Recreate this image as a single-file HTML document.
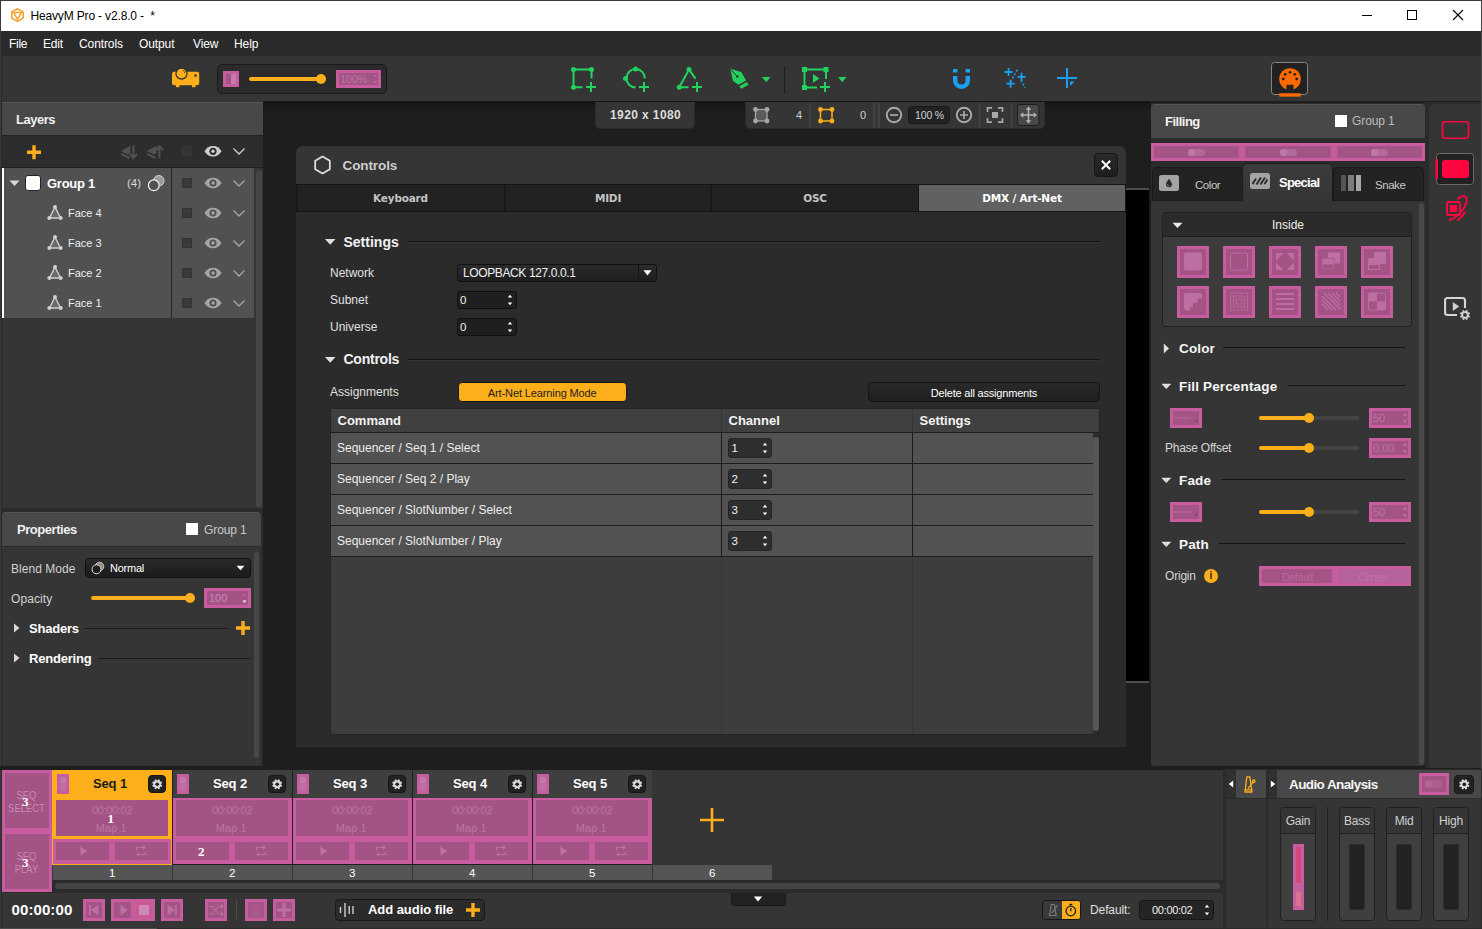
<!DOCTYPE html>
<html lang="en">
<head>
<meta charset="utf-8">
<title>HeavyM Pro - v2.8.0</title>
<style>
*{box-sizing:border-box;margin:0;padding:0}
html,body{width:1482px;height:929px;overflow:hidden;background:#353535}
body{font-family:"Liberation Sans",sans-serif;font-size:12px;color:#e4e4e4;position:relative}
.a{position:absolute}
.t{position:absolute;white-space:nowrap;line-height:1}
.b{font-weight:bold}
svg{position:absolute;overflow:visible}
/* pink learn-mode overlay widgets */
.pk{position:absolute;background:#a35384;border:3px solid #c75d9f}
.pkf{position:absolute;background:#c75d9f}
.pki{position:absolute;background:#a35384}
.pt{color:#bb76a3}
/* generic */
.sep{position:absolute;background:#1c1c1c}
.inp{position:absolute;background:#1d1d1d;border:1px solid #101010;border-radius:3px}
</style>
</head>
<body>
<!-- ===== window chrome ===== -->
<div class="a" id="titlebar" style="left:0;top:0;width:1482px;height:31px;background:#fff"></div>
<div class="a" style="left:0;top:0;width:1482px;height:1px;background:#3b3b3b"></div>
<div class="a" style="left:0;top:31px;width:2px;height:898px;background:#2b2b2b"></div><div class="a" style="left:0;top:0;width:1px;height:929px;background:#3a3a3a"></div>
<div class="t" style="left:30.500px;top:10px;font-size:12px;letter-spacing:-.16px;color:#000">HeavyM Pro - v2.8.0 -&nbsp; *</div>
<!-- SECTION:titleicons -->
<svg style="left:11px;top:8px" width="13" height="14" viewBox="0 0 13 14"><path d="M6.5 .7 12.2 3.9V10.1L6.5 13.3.8 10.1V3.9Z" fill="none" stroke="#f6a233" stroke-width="1.600" stroke-linejoin="round"/><path d="M2.600 4.600H10.400L6.500 11.200Z" fill="none" stroke="#f6a233" stroke-width="1.500" stroke-linejoin="round"/><path d="M.8 3.9 2.6 4.6M12.2 3.9 10.4 4.6M6.5 13.3V11.2" stroke="#f5a53a" stroke-width="1"/></svg>
<svg style="left:1362px;top:10px" width="11" height="11" viewBox="0 0 11 11"><path d="M0 5.5H10" stroke="#000" stroke-width="1"/></svg>
<svg style="left:1407px;top:10px" width="11" height="11" viewBox="0 0 11 11"><rect x=".5" y=".5" width="9" height="9" fill="none" stroke="#000" stroke-width="1"/></svg>
<svg style="left:1453px;top:10px" width="11" height="11" viewBox="0 0 11 11"><path d="M0 0 10 10M10 0 0 10" stroke="#000" stroke-width="1.1"/></svg>

<!-- /SECTION:titleicons -->
<!-- ===== menubar ===== -->
<div class="a" id="menubar" style="left:2px;top:31px;width:1480px;height:25px;background:#2a2a2a"></div>
<!-- SECTION:menu -->
<div class="t" style="left:9px;top:38px;color:#fff;letter-spacing:-.3px">File</div>
<div class="t" style="left:43px;top:38px;color:#fff;letter-spacing:-.2px">Edit</div>
<div class="t" style="left:79px;top:38px;color:#fff;letter-spacing:-.1px">Controls</div>
<div class="t" style="left:139px;top:38px;color:#fff;letter-spacing:-.1px">Output</div>
<div class="t" style="left:193px;top:38px;color:#fff;letter-spacing:-.1px">View</div>
<div class="t" style="left:234px;top:38px;color:#fff;letter-spacing:-.1px">Help</div>

<!-- /SECTION:menu -->
<!-- ===== main toolbar ===== -->
<div class="a" id="toolbar" style="left:2px;top:56px;width:1480px;height:45px;background:#353535"></div>
<!-- SECTION:toolbar -->
<!-- projector -->
<svg style="left:171px;top:66px" width="30" height="22" viewBox="0 0 30 22"><rect x="1" y="5.700" width="27.200" height="13.600" rx="2.200" fill="#fcaf1b"/><rect x="5" y="19" width="3.400" height="2.200" fill="#fcaf1b"/><rect x="21" y="19" width="3.400" height="2.200" fill="#fcaf1b"/><circle cx="10.500" cy="7.600" r="6.100" fill="#2a2a35"/><circle cx="10.500" cy="7.600" r="4.900" fill="#fcaf1b"/><path d="M12.300 4.600a3.300 3.300 0 0 1 1.500 2.200" stroke="#2a2a35" stroke-width="1" fill="none"/><circle cx="24.500" cy="9.500" r="1.300" fill="#3a3530"/></svg>
<!-- master opacity box -->
<div class="a" style="left:217px;top:64px;width:170px;height:30px;background:#2b2b2b;border:1px solid #1a1a1a;border-radius:5px"></div>
<div class="pk" style="left:223px;top:71px;width:16px;height:16px"></div><div class="a" style="left:231px;top:74px;width:5px;height:10px;background:#c57aa7"></div>
<div class="a" style="left:249px;top:77px;width:74px;height:4px;border-radius:2px;background:#fcaf1b"></div>
<div class="a" style="left:316px;top:74px;width:10px;height:10px;border-radius:5px;background:#fcaf1b"></div>
<div class="pk" style="left:336px;top:70px;width:45px;height:18px"></div>
<div class="t pt" style="left:340px;top:74px;font-size:11px;letter-spacing:-.3px">100%</div>
<svg style="left:372px;top:73px" width="6" height="12" viewBox="0 0 6 12"><path d="M1 3.500 3 1.500 5 3.500ZM1 8.500 3 10.500 5 8.500Z" fill="#b9729f"/></svg>
<!-- green shape tools -->
<svg style="left:560px;top:60px" width="300" height="40" viewBox="0 0 300 40" fill="none" stroke="#22d15e" stroke-width="2" stroke-linecap="butt">
 <path d="M31.500 18.500V9.500H13.500V27.300H22.500"/><g fill="#22d15e" stroke="none"><circle cx="13.500" cy="9.500" r="2.500"/><circle cx="31.500" cy="9.500" r="2.500"/><circle cx="13.500" cy="27.300" r="2.500"/></g><path d="M26 27h10M31 22v10"/>
 <path d="M84.800 18.500A9.200 9.200 0 1 0 75.600 27.500"/><g fill="#22d15e" stroke="none"><circle cx="75.600" cy="9" r="2.500"/><circle cx="65.500" cy="18.500" r="2.500"/></g><path d="M79 27h10M84 22v10"/>
 <path d="M135.500 18.700 129 9.500 119.300 27.200H128.500"/><g fill="#22d15e" stroke="none"><circle cx="129" cy="9.500" r="2.500"/><circle cx="119.300" cy="27.300" r="2.500"/></g><path d="M132 27h10M137 22v10"/>
 <g fill="#22d15e" stroke="none"><path d="M170.300 8.600 181.500 12.300 186 20.500 178.500 24.800 173 21Z"/><path d="M179.300 26.300 186.800 22 188.500 24.800 181.200 28.800Z"/><path d="M202 17h8.500l-4.250 5.200Z"/><path d="M278 17h8.500l-4.250 5.200Z"/></g>
 <circle cx="177.300" cy="16.500" r="1.300" fill="#353535" stroke="none"/><path d="M170.600 9 176.500 15.700" stroke="#353535" stroke-width="1"/>
 <path d="M224.500 6v28" stroke="#1e1e1e" stroke-width="1.200"/>
 <path d="M266 19V9.500H244.500V27.500H257"/><g fill="#22d15e" stroke="none"><rect x="242" y="7" width="5" height="5"/><rect x="263.500" y="7" width="5" height="5"/><rect x="242" y="25" width="5" height="5"/><path d="M253 14 259.500 18.500 253 23Z"/></g><path d="M260 27h10M265 22v10"/>
</svg>
<!-- blue tools -->
<svg style="left:940px;top:60px" width="160" height="40" viewBox="0 0 160 40" fill="none" stroke="#1aa1f5" stroke-width="2">
 <path d="M15.200 16v4.500a6.300 6.300 0 0 0 12.600 0V16" stroke-width="4.400"/><path d="M13 10.800h4.400M25.600 10.800H30" stroke-width="3.600"/>
 <path d="M64.500 12h8M68.500 8v8M77.500 16.800h8M81.500 12.800v8M66.500 23.700h8M70.500 19.700v8" stroke-width="1.800"/><path d="M77.500 9.500 71 21" stroke-width="1.300" stroke-dasharray="2.500 1.500"/><path d="M81 20 85 28" stroke-width="1.300" stroke-dasharray="2.500 1.500"/>
 <path d="M117 18h20M127 8v20"/><path d="M130 21.500h4.500l-4.500 4.500Z" fill="#1aa1f5" stroke="none"/>
</svg>
<!-- midi button -->
<div class="a" style="left:1271px;top:62px;width:37px;height:33px;background:#222;border:1px solid #858585;border-radius:3.500px"></div>
<svg style="left:1277.500px;top:66.500px" width="24" height="30" viewBox="0 0 24 30"><circle cx="12" cy="12" r="10.800" fill="#ff6a00"/><rect x="8.500" y="17.800" width="7" height="6" fill="#222"/><g fill="#222"><circle cx="12" cy="5.300" r="1.400"/><circle cx="7.200" cy="7.300" r="1.400"/><circle cx="16.800" cy="7.300" r="1.400"/><circle cx="5.300" cy="12" r="1.400"/><circle cx="18.700" cy="12" r="1.400"/></g><rect x="1.300" y="26.300" width="21.400" height="3.300" fill="#ff6a00"/></svg>

<!-- /SECTION:toolbar -->
<!-- ===== canvas ===== -->
<div class="a" id="canvas" style="left:263px;top:101px;width:1218px;height:669px;background:#1e1e1e"></div>
<!-- SECTION:canvas -->
<div class="a" style="left:263px;top:101px;width:887px;height:12px;background:linear-gradient(#141414,#1e1e1e)"></div>
<div class="a" style="left:1126px;top:188px;width:23px;height:2px;background:#4e4e4e"></div>
<div class="a" style="left:1126px;top:190px;width:23px;height:491px;background:#000"></div>
<div class="a" style="left:1126px;top:681px;width:23px;height:2px;background:#4e4e4e"></div>
<div class="a" style="left:595px;top:102px;width:100px;height:27px;background:#353535;border:1px solid #2a2a2a;border-top:0;border-radius:0 0 5px 5px"></div>
<div class="t b" style="left:610px;top:109px;font-size:12px;color:#dcdcdc;letter-spacing:.4px">1920 x 1080</div>
<div class="a" style="left:745px;top:102px;width:300px;height:27px;background:#353535;border:1px solid #2a2a2a;border-top:0;border-radius:0 0 5px 5px"></div>
<svg style="left:745px;top:102px" width="300" height="27" viewBox="0 0 300 27" fill="none">
 <rect x="10.500" y="7.500" width="11.500" height="11.500" fill="#5a5a5a" stroke="#a8a8a8" stroke-width="1.300"/><g fill="#a8a8a8"><circle cx="10.500" cy="7.500" r="2.400"/><circle cx="22" cy="7.500" r="2.400"/><circle cx="10.500" cy="19" r="2.400"/><circle cx="22" cy="19" r="2.400"/></g>
 <rect x="75.500" y="7.500" width="11.500" height="11.500" stroke="#fcaf1b" stroke-width="1.500"/><g fill="#fcaf1b"><circle cx="75.500" cy="7.500" r="2.400"/><circle cx="87" cy="7.500" r="2.400"/><circle cx="75.500" cy="19" r="2.400"/><circle cx="87" cy="19" r="2.400"/></g>
 <path d="M65 1v25M129.200 1v25M134 1v25M234.500 1v25M266.500 1v25" stroke="#454545" stroke-width="1.600"/>
 <circle cx="149" cy="13" r="7.200" stroke="#ababab" stroke-width="1.900"/><path d="M145 13h8" stroke="#a8a8a8" stroke-width="1.700"/>
 <circle cx="219" cy="13" r="7.200" stroke="#ababab" stroke-width="1.900"/><path d="M215 13h8M219 9v8" stroke="#a8a8a8" stroke-width="1.700"/>
 <rect x="163.500" y="4.500" width="41" height="17" rx="3" fill="#222" stroke="#1a1a1a"/>
 <path d="M242.500 10V5.800h4.500M253 5.800h4.500V10M257.500 16v4.200H253M247 20.200h-4.500V16" stroke="#a8a8a8" stroke-width="1.700"/><rect x="247" y="10" width="6" height="6" fill="#a8a8a8"/>
 <rect x="272.500" y="2.500" width="21.500" height="21" rx="2.500" fill="#484848" stroke="#1e1e1e"/>
 <path d="M277 13h13M283.500 6.500v13" stroke="#b4b4b4" stroke-width="1.500"/><path d="M283.500 4.500 286.300 7.800h-5.600ZM283.500 21.500 286.300 18.200h-5.600ZM275 13 278.300 10.200v5.600ZM292 13 288.700 10.200v5.600Z" fill="#b4b4b4"/>
</svg>
<div class="t" style="left:796px;top:110px;font-size:11px;color:#cfcfcf">4</div>
<div class="t" style="left:860px;top:110px;font-size:11px;color:#cfcfcf">0</div>
<div class="t" style="left:915px;top:110px;font-size:10.500px;color:#d4d4d4;letter-spacing:-.15px">100 %</div>

<!-- /SECTION:canvas -->
<!-- ===== left: layers ===== -->
<!-- SECTION:layers -->
<div class="a" style="left:2px;top:102px;width:261px;height:33px;background:#484848;border-top:1px solid #555"></div>
<div class="t b" style="left:16px;top:112.500px;font-size:13px;color:#efefef;letter-spacing:-.5px">Layers</div>
<div class="a" style="left:2px;top:135px;width:261px;height:33px;background:#2d2d2d;border-top:1px solid #222;border-bottom:1px solid #202020"></div>
<div class="a" style="left:2px;top:168px;width:261px;height:340px;background:#353535"></div>
<div class="a" style="left:2px;top:168px;width:252px;height:149.500px;background:#515151"></div>
<div class="a" style="left:1.500px;top:168px;width:2.800px;height:149.500px;background:#fff"></div>
<div class="a" style="left:171px;top:168px;width:1px;height:149.500px;background:#262626"></div>
<div class="a" style="left:256px;top:170px;width:6px;height:337px;background:#454545;border-radius:3px"></div>
<svg style="left:0;top:133.500px" width="263" height="34" viewBox="0 0 263 34">
<path d="M27 18.300h14M34 11.300v14" stroke="#fcaf1b" stroke-width="3.400"/>
<g fill="#525252" stroke="none"><path d="M120.800 17 130.300 12V19.500L127.500 20.300Z"/><path d="M146.800 17 156.300 12V19.500L153.500 20.300Z"/></g><g stroke="#525252" stroke-width="2" fill="none"><path d="M121.200 19.800 129.500 24M147.200 19.800 155.500 24"/><path d="M133.400 11.500v12M129.800 19.800l3.600 4.300 3.600-4.300"/><path d="M159.400 24.500v-12M155.800 16.300l3.600-4.300 3.600 4.300"/></g><rect x="182.500" y="12.500" width="9" height="9" fill="#333" stroke="#383838"/>
<g transform="translate(204.5 12)"><path d="M0 5.300C2 1.800 5 0 8.500 0S15 1.800 17 5.300C15 8.800 12 10.600 8.500 10.600S2 8.800 0 5.300Z" fill="#cfcfcf"/><circle cx="8.500" cy="5.300" r="3.600" fill="#2b2b2b"/><circle cx="8.500" cy="5.300" r="1.700" fill="#cfcfcf"/></g>
<path d="M233.500 14.500 239 20 244.500 14.500" stroke="#cfcfcf" stroke-width="1.300" fill="none"/>
</svg>
<svg style="left:0;top:168px" width="263" height="150" viewBox="0 0 263 150">
<rect x="182.500" y="10.5" width="9" height="9" fill="#393939" stroke="#333"/>
<g transform="translate(204.5 9.7)"><path d="M0 5.300C2 1.800 5 0 8.500 0S15 1.800 17 5.300C15 8.800 12 10.600 8.500 10.600S2 8.800 0 5.300Z" fill="#a6a6a6"/><circle cx="8.500" cy="5.300" r="3.600" fill="#515151"/><circle cx="8.500" cy="5.300" r="1.700" fill="#a6a6a6"/></g>
<path d="M233.500 12.5 239 18 244.500 12.5" stroke="#a6a6a6" stroke-width="1.300" fill="none"/>
<rect x="182.500" y="40.5" width="9" height="9" fill="#393939" stroke="#333"/>
<g transform="translate(204.5 39.7)"><path d="M0 5.300C2 1.800 5 0 8.500 0S15 1.800 17 5.300C15 8.800 12 10.600 8.500 10.600S2 8.800 0 5.300Z" fill="#a6a6a6"/><circle cx="8.500" cy="5.300" r="3.600" fill="#515151"/><circle cx="8.500" cy="5.300" r="1.700" fill="#a6a6a6"/></g>
<path d="M233.500 42.5 239 48 244.500 42.5" stroke="#a6a6a6" stroke-width="1.300" fill="none"/>
<g transform="translate(47 36.5)"><path d="M8 2.500 2.500 13.500h11Z" fill="#6a6a6a" stroke="#d0d0d0" stroke-width="1.400" stroke-linejoin="round"/><g fill="#d0d0d0"><circle cx="8" cy="2.500" r="2"/><circle cx="2.300" cy="13.500" r="2"/><circle cx="13.700" cy="13.500" r="2"/></g></g>
<rect x="182.500" y="70.5" width="9" height="9" fill="#393939" stroke="#333"/>
<g transform="translate(204.5 69.7)"><path d="M0 5.300C2 1.800 5 0 8.500 0S15 1.800 17 5.300C15 8.800 12 10.600 8.500 10.600S2 8.800 0 5.300Z" fill="#a6a6a6"/><circle cx="8.500" cy="5.300" r="3.600" fill="#515151"/><circle cx="8.500" cy="5.300" r="1.700" fill="#a6a6a6"/></g>
<path d="M233.500 72.5 239 78 244.500 72.5" stroke="#a6a6a6" stroke-width="1.300" fill="none"/>
<g transform="translate(47 66.5)"><path d="M8 2.500 2.500 13.500h11Z" fill="#6a6a6a" stroke="#d0d0d0" stroke-width="1.400" stroke-linejoin="round"/><g fill="#d0d0d0"><circle cx="8" cy="2.500" r="2"/><circle cx="2.300" cy="13.500" r="2"/><circle cx="13.700" cy="13.500" r="2"/></g></g>
<rect x="182.500" y="100.5" width="9" height="9" fill="#393939" stroke="#333"/>
<g transform="translate(204.5 99.7)"><path d="M0 5.300C2 1.800 5 0 8.500 0S15 1.800 17 5.300C15 8.800 12 10.600 8.500 10.600S2 8.800 0 5.300Z" fill="#a6a6a6"/><circle cx="8.500" cy="5.300" r="3.600" fill="#515151"/><circle cx="8.500" cy="5.300" r="1.700" fill="#a6a6a6"/></g>
<path d="M233.500 102.5 239 108 244.500 102.5" stroke="#a6a6a6" stroke-width="1.300" fill="none"/>
<g transform="translate(47 96.5)"><path d="M8 2.500 2.500 13.500h11Z" fill="#6a6a6a" stroke="#d0d0d0" stroke-width="1.400" stroke-linejoin="round"/><g fill="#d0d0d0"><circle cx="8" cy="2.500" r="2"/><circle cx="2.300" cy="13.500" r="2"/><circle cx="13.700" cy="13.500" r="2"/></g></g>
<rect x="182.500" y="130.5" width="9" height="9" fill="#393939" stroke="#333"/>
<g transform="translate(204.5 129.7)"><path d="M0 5.300C2 1.800 5 0 8.500 0S15 1.800 17 5.300C15 8.800 12 10.600 8.500 10.600S2 8.800 0 5.300Z" fill="#a6a6a6"/><circle cx="8.500" cy="5.300" r="3.600" fill="#515151"/><circle cx="8.500" cy="5.300" r="1.700" fill="#a6a6a6"/></g>
<path d="M233.500 132.5 239 138 244.500 132.5" stroke="#a6a6a6" stroke-width="1.300" fill="none"/>
<g transform="translate(47 126.5)"><path d="M8 2.500 2.500 13.500h11Z" fill="#6a6a6a" stroke="#d0d0d0" stroke-width="1.400" stroke-linejoin="round"/><g fill="#d0d0d0"><circle cx="8" cy="2.500" r="2"/><circle cx="2.300" cy="13.500" r="2"/><circle cx="13.700" cy="13.500" r="2"/></g></g>
<path d="M9.500 12.500h10l-5 5.500Z" fill="#d8d8d8"/>
<rect x="25.500" y="7.500" width="15" height="15" rx="2.500" fill="#fff" stroke="#222" stroke-width="1"/>
<circle cx="158.800" cy="12.700" r="5.200" fill="#9a9a9a" stroke="#e0e0e0" stroke-width=".9"/><circle cx="153.800" cy="17.300" r="5.400" fill="#515151" stroke="#f2f2f2" stroke-width="1.200"/>
</svg>
<div class="t b" style="left:47px;top:177px;font-size:13px;color:#fff;letter-spacing:-.25px">Group 1</div>
<div class="t" style="left:127px;top:178px;font-size:11.500px;color:#d8d8d8">(4)</div>
<div class="t" style="left:68px;top:208px;font-size:11px;color:#f0f0f0">Face 4</div>
<div class="t" style="left:68px;top:238px;font-size:11px;color:#f0f0f0">Face 3</div>
<div class="t" style="left:68px;top:268px;font-size:11px;color:#f0f0f0">Face 2</div>
<div class="t" style="left:68px;top:298px;font-size:11px;color:#f0f0f0">Face 1</div>
<!-- /SECTION:layers -->
<!-- ===== left: properties ===== -->
<!-- SECTION:props -->
<div class="a" style="left:2px;top:508px;width:261px;height:258px;background:#2b2b2b"></div><div class="a" style="left:0;top:766px;width:263px;height:4px;background:#1e1e1e"></div>
<div class="a" style="left:2px;top:512px;width:259px;height:35px;background:#484848;border-top:1px solid #565656;border-radius:4px 4px 0 0;border-bottom:1px solid #2a2a2a"></div>
<div class="a" style="left:2px;top:547px;width:259px;height:219px;background:#353535"></div>
<div class="t b" style="left:17px;top:523px;font-size:13px;color:#efefef;letter-spacing:-.45px">Properties</div>
<div class="a" style="left:186px;top:523px;width:12px;height:12px;background:#fff"></div>
<div class="t" style="left:204px;top:524px;font-size:12px;color:#c8c8c8;letter-spacing:-.1px">Group 1</div>
<div class="t" style="left:11px;top:563px;font-size:12px;color:#d2d2d2;letter-spacing:.05px">Blend Mode</div>
<div class="inp" style="left:85px;top:558px;width:166px;height:20px;border-radius:4px;background:linear-gradient(#2a2a2a,#1b1b1b)"></div>
<svg style="left:91px;top:561px" width="14" height="14" viewBox="0 0 14 14"><circle cx="8.500" cy="5.500" r="4.300" fill="#8a8a8a" stroke="#cfcfcf" stroke-width=".9"/><circle cx="5.500" cy="8.300" r="4.500" fill="#1e1e1e" stroke="#e0e0e0" stroke-width="1"/></svg>
<div class="t" style="left:110px;top:563px;font-size:11px;color:#fff;letter-spacing:-.25px">Normal</div>
<svg style="left:236px;top:565px" width="9" height="6" viewBox="0 0 9 6"><path d="M.5 .8h8L4.500 5.300Z" fill="#fff"/></svg>
<div class="t" style="left:11px;top:593px;font-size:12px;color:#d2d2d2;letter-spacing:.1px">Opacity</div>
<div class="a" style="left:91px;top:596px;width:98px;height:4px;border-radius:2px;background:#fcaf1b"></div>
<div class="a" style="left:185px;top:593px;width:10px;height:10px;border-radius:5px;background:#fcaf1b"></div>
<div class="pk" style="left:204px;top:588px;width:47px;height:20px"></div>
<div class="t pt" style="left:209px;top:593px;font-size:11px;color:#c88bbb">100</div>
<svg style="left:241px;top:591px" width="7" height="14" viewBox="0 0 7 14"><path d="M1.500 4.500 3.500 2.500 5.500 4.500Z" fill="#b56f9a"/><path d="M1.200 9.500h4.600L3.500 12Z" fill="#f0dbe8"/></svg>
<svg style="left:2px;top:618px" width="259" height="50" viewBox="0 0 259 50"><path d="M12 5.500v9l5.500-4.500ZM12 35.500v9l5.500-4.500Z" fill="#d8d8d8"/><path d="M82 10.500h145M96 40.500h152" stroke="#1b1b1b" stroke-width="1"/><path d="M234 10h14M241 3v14" stroke="#fcaf1b" stroke-width="3.400"/></svg>
<div class="t b" style="left:29px;top:622px;font-size:13px;color:#fff;letter-spacing:-.2px">Shaders</div>
<div class="t b" style="left:29px;top:652px;font-size:13px;color:#fff;letter-spacing:-.2px">Rendering</div>
<div class="a" style="left:254px;top:552px;width:5px;height:206px;background:#484848;border-radius:3px"></div>

<!-- /SECTION:props -->
<!-- ===== dialog ===== -->
<!-- SECTION:dialog -->
<div class="a" style="left:296px;top:146px;width:830px;height:601px;background:#2b2b2b;border-radius:7px 7px 0 0"></div>
<div class="a" style="left:296px;top:146px;width:830px;height:38px;background:#353535;border-radius:7px 7px 0 0"></div>
<svg style="left:313px;top:155px" width="19" height="20" viewBox="0 0 19 20"><path d="M9.500 1.500 16.800 5.700V14.300L9.500 18.500 2.200 14.300V5.700Z" fill="none" stroke="#e2e2e2" stroke-width="1.700" stroke-linejoin="round"/></svg>
<div class="t b" style="left:342.500px;top:158.500px;font-size:13.500px;color:#cdcdcd;letter-spacing:-.1px">Controls</div>
<div class="a" style="left:1094px;top:153px;width:24px;height:24px;background:linear-gradient(#2a2a2a,#1e1e1e);border:1px solid #161616;border-radius:4px"></div>
<svg style="left:1101px;top:160px" width="10" height="10" viewBox="0 0 10 10"><path d="M.8 .8 9.200 9.200M9.200 .8 .8 9.200" stroke="#fff" stroke-width="2"/></svg>
<div class="a" style="left:296px;top:184px;width:830px;height:28px;background:#141414"></div>
<div class="a" style="left:297px;top:185px;width:207px;height:26px;background:#222;color:#c4c4c4;font-family:'DejaVu Sans','Liberation Sans',sans-serif;font-weight:bold;font-size:10.500px;text-align:center;line-height:26px;letter-spacing:-.2px">Keyboard</div>
<div class="a" style="left:505px;top:185px;width:206px;height:26px;background:#222;color:#c4c4c4;font-family:'DejaVu Sans','Liberation Sans',sans-serif;font-weight:bold;font-size:10.500px;text-align:center;line-height:26px;letter-spacing:-.2px">MIDI</div>
<div class="a" style="left:712px;top:185px;width:206px;height:26px;background:#222;color:#c4c4c4;font-family:'DejaVu Sans','Liberation Sans',sans-serif;font-weight:bold;font-size:10.500px;text-align:center;line-height:26px;letter-spacing:-.2px">OSC</div>
<div class="a" style="left:919px;top:185px;width:206px;height:26px;background:#616161;color:#fff;font-family:'DejaVu Sans','Liberation Sans',sans-serif;font-weight:bold;font-size:10.500px;text-align:center;line-height:26px;letter-spacing:-.2px">DMX / Art-Net</div>
<svg style="left:296px;top:212px" width="830" height="200" viewBox="0 0 830 200"><path d="M29 27h10.500l-5.250 5.800ZM29 145h10.500l-5.250 5.800Z" fill="#e0e0e0"/><path d="M112 29.500h692M112 147.500h692" stroke="#151515" stroke-width="1.200"/><path d="M112 30.600h692M112 148.600h692" stroke="#383838" stroke-width=".8"/></svg>
<div class="t b" style="left:343.500px;top:234.500px;font-size:14px;color:#f2f2f2">Settings</div>
<div class="t b" style="left:343.500px;top:352px;font-size:14px;color:#f2f2f2;letter-spacing:-.25px">Controls</div>
<div class="t" style="left:330px;top:267px;font-size:12px;color:#e0e0e0">Network</div>
<div class="t" style="left:330px;top:294px;font-size:12px;color:#e0e0e0">Subnet</div>
<div class="t" style="left:330px;top:321px;font-size:12px;color:#e0e0e0">Universe</div>
<div class="t" style="left:330px;top:386px;font-size:12px;color:#e0e0e0">Assignments</div>
<div class="inp" style="left:457px;top:264px;width:200px;height:18px;background:linear-gradient(#2b2b2b,#1e1e1e)"></div>
<div class="a" style="left:638px;top:265px;width:1px;height:16px;background:#161616"></div>
<svg style="left:643px;top:270px" width="9" height="6" viewBox="0 0 9 6"><path d="M.5 .3h8L4.500 5.600Z" fill="#fff"/></svg>
<div class="t" style="left:463px;top:267px;font-size:12px;color:#f0f0f0;letter-spacing:-.38px">LOOPBACK 127.0.0.1</div>
<div class="a" style="left:457px;top:291px;width:60px;height:18px;background:#1f1f1f;border:1px solid #101010;border-radius:3px"></div>
<div class="t" style="left:460px;top:295px;font-size:11.500px;color:#f0f0f0">0</div>
<svg style="left:507px;top:293px" width="6" height="14" viewBox="0 0 6 14"><path d="M.8 4.500 3 1.800 5.200 4.500ZM.8 9.500 3 12.200 5.200 9.500Z" fill="#fff"/></svg>
<div class="a" style="left:457px;top:318px;width:60px;height:18px;background:#1f1f1f;border:1px solid #101010;border-radius:3px"></div>
<div class="t" style="left:460px;top:322px;font-size:11.500px;color:#f0f0f0">0</div>
<svg style="left:507px;top:320px" width="6" height="14" viewBox="0 0 6 14"><path d="M.8 4.500 3 1.800 5.200 4.500ZM.8 9.500 3 12.200 5.200 9.500Z" fill="#fff"/></svg>
<div class="a" style="left:457.500px;top:382px;width:169.500px;height:20px;background:#fcaf1b;border:1px solid #1c1c1c;border-radius:4px;color:#222;font-size:11px;text-align:center;line-height:20px;letter-spacing:-.12px">Art-Net Learning Mode</div>
<div class="a" style="left:868px;top:382px;width:232px;height:20px;background:linear-gradient(#292929,#1f1f1f);border:1px solid #141414;border-radius:4px;color:#fff;font-size:11px;text-align:center;line-height:20px;letter-spacing:-.2px">Delete all assignments</div>
<div class="a" style="left:330px;top:408px;width:770px;height:327px;background:#3d3d3d;border:1px solid #242424;border-radius:3px 3px 0 0"></div>
<div class="a" style="left:331px;top:409px;width:768px;height:23px;background:#404040"></div>
<div class="a" style="left:331px;top:432px;width:768px;height:1px;background:#1f1f1f"></div>
<div class="a" style="left:331px;top:433px;width:762px;height:30px;background:#525252"></div>
<div class="a" style="left:331px;top:463px;width:762px;height:1px;background:#1c1c1c"></div>
<div class="a" style="left:331px;top:464px;width:762px;height:30px;background:#525252"></div>
<div class="a" style="left:331px;top:494px;width:762px;height:1px;background:#1c1c1c"></div>
<div class="a" style="left:331px;top:495px;width:762px;height:30px;background:#525252"></div>
<div class="a" style="left:331px;top:525px;width:762px;height:1px;background:#1c1c1c"></div>
<div class="a" style="left:331px;top:526px;width:762px;height:30px;background:#525252"></div>
<div class="a" style="left:331px;top:556px;width:762px;height:1px;background:#1c1c1c"></div>
<div class="a" style="left:721px;top:409px;width:1px;height:23px;background:#353535"></div>
<div class="a" style="left:721px;top:433px;width:1px;height:124px;background:#1c1c1c"></div>
<div class="a" style="left:721px;top:557px;width:1px;height:177px;background:#363636"></div>
<div class="a" style="left:912px;top:409px;width:1px;height:23px;background:#353535"></div>
<div class="a" style="left:912px;top:433px;width:1px;height:124px;background:#1c1c1c"></div>
<div class="a" style="left:912px;top:557px;width:1px;height:177px;background:#363636"></div>
<div class="a" style="left:1093px;top:433px;width:6px;height:301px;background:#2b2b2b"></div>
<div class="a" style="left:1093px;top:437px;width:6px;height:294px;background:#565656;border-radius:3px"></div>
<div class="t b" style="left:337.5px;top:414px;font-size:13px;color:#f4f4f4">Command</div>
<div class="t b" style="left:728.5px;top:414px;font-size:13px;color:#f4f4f4">Channel</div>
<div class="t b" style="left:919.5px;top:414px;font-size:13px;color:#f4f4f4">Settings</div>
<div class="t" style="left:337px;top:442px;font-size:12px;color:#ececec">Sequencer / Seq 1 / Select</div>
<div class="a" style="left:728px;top:438px;width:44px;height:20px;background:#2e2e2e;border:1px solid #262626;border-radius:3px"></div>
<div class="t" style="left:731.500px;top:443px;font-size:11.500px;color:#f0f0f0">1</div>
<svg style="left:762px;top:441px" width="6" height="14" viewBox="0 0 6 14"><path d="M.8 4.500 3 1.800 5.200 4.500ZM.8 9.500 3 12.200 5.200 9.500Z" fill="#fff"/></svg>
<div class="t" style="left:337px;top:473px;font-size:12px;color:#ececec">Sequencer / Seq 2 / Play</div>
<div class="a" style="left:728px;top:469px;width:44px;height:20px;background:#2e2e2e;border:1px solid #262626;border-radius:3px"></div>
<div class="t" style="left:731.500px;top:474px;font-size:11.500px;color:#f0f0f0">2</div>
<svg style="left:762px;top:472px" width="6" height="14" viewBox="0 0 6 14"><path d="M.8 4.500 3 1.800 5.200 4.500ZM.8 9.500 3 12.200 5.200 9.500Z" fill="#fff"/></svg>
<div class="t" style="left:337px;top:504px;font-size:12px;color:#ececec">Sequencer / SlotNumber / Select</div>
<div class="a" style="left:728px;top:500px;width:44px;height:20px;background:#2e2e2e;border:1px solid #262626;border-radius:3px"></div>
<div class="t" style="left:731.500px;top:505px;font-size:11.500px;color:#f0f0f0">3</div>
<svg style="left:762px;top:503px" width="6" height="14" viewBox="0 0 6 14"><path d="M.8 4.500 3 1.800 5.200 4.500ZM.8 9.500 3 12.200 5.200 9.500Z" fill="#fff"/></svg>
<div class="t" style="left:337px;top:535px;font-size:12px;color:#ececec">Sequencer / SlotNumber / Play</div>
<div class="a" style="left:728px;top:531px;width:44px;height:20px;background:#2e2e2e;border:1px solid #262626;border-radius:3px"></div>
<div class="t" style="left:731.500px;top:536px;font-size:11.500px;color:#f0f0f0">3</div>
<svg style="left:762px;top:534px" width="6" height="14" viewBox="0 0 6 14"><path d="M.8 4.500 3 1.800 5.200 4.500ZM.8 9.500 3 12.200 5.200 9.500Z" fill="#fff"/></svg>
<!-- /SECTION:dialog -->
<!-- ===== right: filling ===== -->
<!-- SECTION:filling -->
<div class="a" style="left:1151px;top:103px;width:274px;height:663px;background:#2b2b2b;border-radius:0 0 4px 4px"></div>
<div class="a" style="left:1151px;top:104px;width:274px;height:34px;background:#484848;border-top:1px solid #565656;border-radius:4px 4px 0 0"></div>
<div class="t b" style="left:1165px;top:115px;font-size:13px;color:#f2f2f2;letter-spacing:-.5px">Filling</div>
<div class="a" style="left:1335px;top:115px;width:12px;height:12px;background:#fff"></div>
<div class="t" style="left:1352px;top:115px;font-size:12px;color:#bdbdbd;letter-spacing:-.1px">Group 1</div>
<div class="pkf" style="left:1151px;top:143px;width:274px;height:18px"></div>
<div class="pki" style="left:1154px;top:146px;width:85px;height:12px"></div>
<div class="a" style="left:1188px;top:148.500px;width:17px;height:7px;border-radius:4px;background:#b3699a"></div>
<div class="a" style="left:1188px;top:148.500px;width:7px;height:7px;border-radius:4px;background:#ba7aa5"></div>
<div class="pki" style="left:1245px;top:146px;width:86px;height:12px"></div>
<div class="a" style="left:1280px;top:148.500px;width:17px;height:7px;border-radius:4px;background:#b3699a"></div>
<div class="a" style="left:1280px;top:148.500px;width:7px;height:7px;border-radius:4px;background:#ba7aa5"></div>
<div class="pki" style="left:1337px;top:146px;width:85px;height:12px"></div>
<div class="a" style="left:1371px;top:148.500px;width:17px;height:7px;border-radius:4px;background:#b3699a"></div>
<div class="a" style="left:1371px;top:148.500px;width:7px;height:7px;border-radius:4px;background:#ba7aa5"></div>
<div class="a" style="left:1152px;top:167px;width:91px;height:34px;background:#232323;border:1px solid #191919;border-bottom:0;border-radius:5px 5px 0 0"></div>
<div class="a" style="left:1333px;top:167px;width:91px;height:34px;background:#232323;border:1px solid #191919;border-bottom:0;border-radius:5px 5px 0 0"></div>
<div class="a" style="left:1151px;top:200px;width:274px;height:566px;background:#353535;border-top:1px solid #1c1c1c;border-radius:0 0 4px 4px"></div>
<div class="a" style="left:1242px;top:163px;width:91px;height:39px;background:linear-gradient(#3c3c3c,#353535);border:1px solid #1c1c1c;border-bottom:0;border-radius:5px 5px 0 0"></div>
<div class="a" style="left:1159px;top:175px;width:20px;height:16px;border-radius:2.500px;background:#a4a4a4"></div>
<svg style="left:1164px;top:178px" width="10" height="10" viewBox="0 0 10 10"><path d="M5 .8C6.500 3 8 4.500 8 6.300A3 3 0 0 1 2 6.300C2 4.500 3.500 3 5 .8Z" fill="#2a2a2a"/><path d="M3.400 6.300a1.700 1.700 0 0 0 1.600 1.700" stroke="#a4a4a4" stroke-width=".8" fill="none"/></svg>
<div class="t" style="left:1195px;top:180px;font-size:11.500px;color:#c8c8c8;letter-spacing:-.45px">Color</div>
<div class="a" style="left:1250px;top:173px;width:20px;height:16px;border-radius:2.500px;background:#a4a4a4"></div>
<svg style="left:1250px;top:173px" width="20" height="16" viewBox="0 0 20 16"><path d="M2.500 11 6 5.500M6.500 11.500 11 4.500M10.500 11.500 15 4.500M14.500 11 17.500 6.500" stroke="#2a2a2a" stroke-width="1.900"/></svg>
<div class="t b" style="left:1279px;top:176px;font-size:13px;color:#fff;letter-spacing:-.75px">Special</div>
<div class="a" style="left:1341px;top:175px;width:5px;height:16px;background:#555"></div><div class="a" style="left:1348px;top:175px;width:5.500px;height:16px;background:#7c7c7c"></div><div class="a" style="left:1355.500px;top:175px;width:5px;height:16px;background:#a8a8a8"></div>
<div class="t" style="left:1375px;top:180px;font-size:11.500px;color:#c8c8c8;letter-spacing:-.45px">Snake</div>
<div class="a" style="left:1418.500px;top:203px;width:5.500px;height:562px;background:#484848;border-radius:3px"></div>
<div class="a" style="left:1162px;top:212px;width:250px;height:115px;background:#3c3c3c;border:1px solid #202020;border-radius:4px 4px 3px 3px"></div>
<div class="a" style="left:1163px;top:213px;width:248px;height:24px;background:#2b2b2b;border-bottom:1px solid #1e1e1e;border-radius:3px 3px 0 0"></div>
<svg style="left:1172px;top:222px" width="11" height="7" viewBox="0 0 11 7"><path d="M.5 .8h10L5.500 6Z" fill="#e8e8e8"/></svg>
<div class="t" style="left:1272px;top:218.500px;font-size:12px;color:#f0f0f0">Inside</div>
<div class="a" style="left:1177px;top:246px;width:32px;height:32px;background:#a35384;border:3px solid #c75d9f"></div>
<svg style="left:1177px;top:246px" width="32" height="32" viewBox="0 0 32 32"><rect x="7" y="6.500" width="18" height="18" rx="2" fill="#bd6fa1"/></svg>
<div class="a" style="left:1223px;top:246px;width:32px;height:32px;background:#a35384;border:3px solid #c75d9f"></div>
<svg style="left:1223px;top:246px" width="32" height="32" viewBox="0 0 32 32"><rect x="7.500" y="7" width="17" height="17" rx="1.500" fill="none" stroke="#bd6fa1" stroke-width="1"/></svg>
<div class="a" style="left:1269px;top:246px;width:32px;height:32px;background:#a35384;border:3px solid #c75d9f"></div>
<svg style="left:1269px;top:246px" width="32" height="32" viewBox="0 0 32 32"><path d="M7 7h7.500L7 14.500ZM25 7h-7.500L25 14.500ZM7 24h7.500L7 16.500ZM25 24h-7.500L25 16.500Z" fill="#bd6fa1"/></svg>
<div class="a" style="left:1315px;top:246px;width:32px;height:32px;background:#a35384;border:3px solid #c75d9f"></div>
<svg style="left:1315px;top:246px" width="32" height="32" viewBox="0 0 32 32"><rect x="13" y="6.500" width="12" height="11" fill="#bd6fa1"/><rect x="14" y="7.500" width="10" height="4" fill="#bd6fa1" opacity=".5"/><rect x="7" y="12.500" width="12" height="11" fill="#bd6fa1" stroke="#a35384" stroke-width=".6"/><rect x="8" y="18.500" width="10" height="4" fill="#a35384"/></svg>
<div class="a" style="left:1361px;top:246px;width:32px;height:32px;background:#a35384;border:3px solid #c75d9f"></div>
<svg style="left:1361px;top:246px" width="32" height="32" viewBox="0 0 32 32"><rect x="13" y="6" width="12" height="12" fill="#bd6fa1"/><rect x="7" y="12" width="12" height="12" fill="#bd6fa1"/><rect x="8" y="19" width="10" height="4" fill="#a35384"/></svg>
<div class="a" style="left:1177px;top:286px;width:32px;height:32px;background:#a35384;border:3px solid #c75d9f"></div>
<svg style="left:1177px;top:286px" width="32" height="32" viewBox="0 0 32 32"><path d="M7 9a2 2 0 0 1 2-2h14a2 2 0 0 1 2 2v3.500h-4.500V17H16v4h-3v3.500H9a2 2 0 0 1-2-2Z" fill="#bd6fa1"/></svg>
<div class="a" style="left:1223px;top:286px;width:32px;height:32px;background:#a35384;border:3px solid #c75d9f"></div>
<svg style="left:1223px;top:286px" width="32" height="32" viewBox="0 0 32 32"><rect x="7.500" y="7" width="17" height="17" rx="1" fill="none" stroke="#bd6fa1" stroke-width=".8"/><rect x="10.500" y="10" width="11" height="11" fill="none" stroke="#bd6fa1" stroke-width=".8"/><rect x="13.500" y="13" width="5" height="5" fill="none" stroke="#bd6fa1" stroke-width=".8"/></svg>
<div class="a" style="left:1269px;top:286px;width:32px;height:32px;background:#a35384;border:3px solid #c75d9f"></div>
<svg style="left:1269px;top:286px" width="32" height="32" viewBox="0 0 32 32"><path d="M7 8h18M7 13h18M7 18h18M7 23h18" stroke="#bd6fa1" stroke-width="1.800"/></svg>
<div class="a" style="left:1315px;top:286px;width:32px;height:32px;background:#a35384;border:3px solid #c75d9f"></div>
<svg style="left:1315px;top:286px" width="32" height="32" viewBox="0 0 32 32"><g stroke="#bd6fa1" stroke-width="1.300"><path d="M7 10l14 14M7 14l10 10M7 18l6 6M9 7l16 16M13 7l12 12M17 7l8 8M21 7l4 4"/></g></svg>
<div class="a" style="left:1361px;top:286px;width:32px;height:32px;background:#a35384;border:3px solid #c75d9f"></div>
<svg style="left:1361px;top:286px" width="32" height="32" viewBox="0 0 32 32"><rect x="7" y="6.500" width="18" height="18" rx="2" fill="#bd6fa1"/><rect x="16" y="7.500" width="8" height="8" fill="#a35384"/><rect x="8" y="15.500" width="8" height="8" fill="#a35384"/></svg>
<svg style="left:1163px;top:343px" width="7" height="11" viewBox="0 0 7 11"><path d="M.8 .5v10L6 5.500Z" fill="#e0e0e0"/></svg>
<div class="t b" style="left:1179px;top:342px;font-size:13.500px;color:#f6f6f6;letter-spacing:.15px">Color</div>
<div class="a" style="left:1223px;top:347px;width:182px;height:1px;background:#161616"></div>
<svg style="left:1161px;top:383px" width="11" height="7" viewBox="0 0 11 7"><path d="M.3 .8h10L5.300 6Z" fill="#e0e0e0"/></svg>
<div class="t b" style="left:1179px;top:380px;font-size:13.500px;color:#f6f6f6;letter-spacing:.15px">Fill Percentage</div>
<div class="a" style="left:1288px;top:385px;width:117px;height:1px;background:#161616"></div>
<svg style="left:1161px;top:477px" width="11" height="7" viewBox="0 0 11 7"><path d="M.3 .8h10L5.300 6Z" fill="#e0e0e0"/></svg>
<div class="t b" style="left:1179px;top:474px;font-size:13.500px;color:#f6f6f6;letter-spacing:.15px">Fade</div>
<div class="a" style="left:1221px;top:479px;width:184px;height:1px;background:#161616"></div>
<svg style="left:1161px;top:541px" width="11" height="7" viewBox="0 0 11 7"><path d="M.3 .8h10L5.300 6Z" fill="#e0e0e0"/></svg>
<div class="t b" style="left:1179px;top:538px;font-size:13.500px;color:#f6f6f6;letter-spacing:.15px">Path</div>
<div class="a" style="left:1219px;top:543px;width:186px;height:1px;background:#161616"></div>
<div class="pk" style="left:1170px;top:408px;width:32px;height:20px"></div>
<svg style="left:1170px;top:408px" width="32" height="20" viewBox="0 0 32 20"><path d="M4 10h17" stroke="#bd6fa1" stroke-width="1"/><path d="M27.500 10v4h-4Z" fill="#8e4672"/></svg>
<div class="a" style="left:1259px;top:416px;width:100px;height:4px;border-radius:2px;background:#444"></div>
<div class="a" style="left:1259px;top:416px;width:50px;height:4px;border-radius:2px;background:#fcaf1b"></div>
<div class="a" style="left:1304px;top:413px;width:10px;height:10px;border-radius:5px;background:#fcaf1b"></div>
<div class="pk" style="left:1369px;top:408px;width:42px;height:20px"></div>
<div class="t pt" style="left:1373px;top:413px;font-size:11px">50</div>
<svg style="left:1402px;top:411px" width="6" height="14" viewBox="0 0 6 14"><path d="M.6 4.800 3 2 5.400 4.800ZM.6 9.200 3 12 5.400 9.200Z" fill="#b9729f"/></svg>
<div class="t" style="left:1165px;top:442px;font-size:12px;color:#d6d6d6;letter-spacing:-.25px">Phase Offset</div>
<div class="a" style="left:1259px;top:446px;width:100px;height:4px;border-radius:2px;background:#444"></div>
<div class="a" style="left:1259px;top:446px;width:50px;height:4px;border-radius:2px;background:#fcaf1b"></div>
<div class="a" style="left:1304px;top:443px;width:10px;height:10px;border-radius:5px;background:#fcaf1b"></div>
<div class="pk" style="left:1369px;top:438px;width:42px;height:20px"></div>
<div class="t pt" style="left:1373px;top:443px;font-size:11px">0.00</div>
<svg style="left:1402px;top:441px" width="6" height="14" viewBox="0 0 6 14"><path d="M.6 4.800 3 2 5.400 4.800ZM.6 9.200 3 12 5.400 9.200Z" fill="#b9729f"/></svg>
<div class="pk" style="left:1170px;top:502px;width:32px;height:20px"></div>
<svg style="left:1170px;top:502px" width="32" height="20" viewBox="0 0 32 20"><path d="M4 10h17" stroke="#bd6fa1" stroke-width="1"/><path d="M27.500 10v4h-4Z" fill="#8e4672"/></svg>
<div class="a" style="left:1259px;top:510px;width:100px;height:4px;border-radius:2px;background:#444"></div>
<div class="a" style="left:1259px;top:510px;width:50px;height:4px;border-radius:2px;background:#fcaf1b"></div>
<div class="a" style="left:1304px;top:507px;width:10px;height:10px;border-radius:5px;background:#fcaf1b"></div>
<div class="pk" style="left:1369px;top:502px;width:42px;height:20px"></div>
<div class="t pt" style="left:1373px;top:507px;font-size:11px">50</div>
<svg style="left:1402px;top:505px" width="6" height="14" viewBox="0 0 6 14"><path d="M.6 4.800 3 2 5.400 4.800ZM.6 9.200 3 12 5.400 9.200Z" fill="#b9729f"/></svg>
<div class="t" style="left:1165px;top:570px;font-size:12px;color:#d6d6d6;letter-spacing:-.2px">Origin</div>
<div class="a" style="left:1204px;top:569px;width:14px;height:14px;border-radius:7px;background:#fcaf1b"></div><div class="t b" style="left:1209.500px;top:571px;font-size:10px;color:#222">i</div>
<div class="pkf" style="left:1259px;top:566px;width:152px;height:20px"></div>
<div class="pki" style="left:1262px;top:569px;width:70px;height:14px"></div><div class="a" style="left:1338px;top:569px;width:70px;height:14px;background:#b5629a"></div>
<div class="t" style="left:1282px;top:571.500px;font-size:10.500px;color:#b96a9c;letter-spacing:-.3px">Default</div>
<div class="t" style="left:1358px;top:571.500px;font-size:10.500px;color:#c272a6;letter-spacing:-.2px">Center</div>
<!-- /SECTION:filling -->
<!-- ===== right strip ===== -->
<!-- SECTION:strip -->
<div class="a" style="left:1425px;top:102px;width:56px;height:666px;background:#2b2b2b"></div>
<div class="a" style="left:1429px;top:104px;width:52px;height:664px;background:#353535;border-radius:5px 0 0 4px"></div>
<div class="a" style="left:1481px;top:0;width:1px;height:929px;background:#4a4a4a"></div>
<svg style="left:1429px;top:103px" width="52" height="230" viewBox="0 0 52 230" fill="none"><rect x="13.500" y="18.800" width="26" height="16.500" rx="2.500" stroke="#ff0640" stroke-width="1.600"/><rect x="7.500" y="50.500" width="37" height="31" rx="3" fill="#222" stroke="#6a6a6a"/><rect x="13" y="57" width="27" height="18" rx="3" fill="#ff0640"/><rect x="6.500" y="56" width="2.500" height="20" fill="#ff0640"/><rect x="18.100" y="98.900" width="12.900" height="13.100" rx="1.500" stroke="#ff0640" stroke-width="2"/><rect x="20.800" y="102" width="7.300" height="7" fill="#ff0640"/><path d="M29.200 95.800C31 93 36.300 91.800 37.600 95.200 39 100 32.500 112.500 20.800 116.900" stroke="#ff0640" stroke-width="2" stroke-linecap="round"/><path d="M35.800 109.500Q33 114 29 116.900" stroke="#ff0640" stroke-width="2" stroke-linecap="round"/><path d="M36 205V197.500a2.500 2.500 0 0 0-2.500-2.500H18.600a2.500 2.500 0 0 0-2.500 2.500v12a2.500 2.500 0 0 0 2.500 2.500H28" stroke="#d6d6d6" stroke-width="2.100"/><path d="M23.800 199v9l6.400-4.500Z" fill="#d0d0d0"/><g transform="translate(30.800 206.700) scale(.867)"><g stroke="#d0d0d0" stroke-width="2.300" transform="rotate(22.500 6 6)"><path d="M6 .2v11.600M.2 6h11.600M1.900 1.900l8.200 8.200M10.100 1.900 1.900 10.100"/></g><circle cx="6" cy="6" r="4.200" fill="#d0d0d0"/><circle cx="6" cy="6" r="2.200" fill="#353535"/></g></svg>
<!-- /SECTION:strip -->
<!-- ===== sequencer ===== -->
<!-- SECTION:seq -->
<div class="a" style="left:2px;top:769px;width:1222px;height:124px;background:#353535;border-top:1px solid #1e1e1e"></div>
<div class="a" style="left:2px;top:880px;width:1221px;height:13px;background:#2b2b2b"></div>
<div class="a" style="left:55px;top:883px;width:1165px;height:6px;background:#454545;border-radius:3px"></div>
<div class="pkf" style="left:2px;top:770px;width:50px;height:122px"></div>
<div class="pki" style="left:5px;top:773px;width:44px;height:55px"></div><div class="pki" style="left:5px;top:834px;width:44px;height:55px"></div>
<div class="t" style="left:2px;width:49px;text-align:center;top:790px;font-size:11px;color:#c98ab3;transform:scaleX(.86)">SEQ</div>
<div class="t" style="left:2px;width:49px;text-align:center;top:803px;font-size:11px;color:#c98ab3;transform:scaleX(.86)">SELECT</div>
<div class="t" style="left:2px;width:49px;text-align:center;top:851px;font-size:11px;color:#c98ab3;transform:scaleX(.86)">SEQ</div>
<div class="t" style="left:2px;width:49px;text-align:center;top:864px;font-size:11px;color:#c98ab3;transform:scaleX(.86)">PLAY</div>
<div class="t" style="left:22px;top:795px;font-size:13px;font-family:'Liberation Serif','DejaVu Serif',serif;font-weight:bold;color:#fff">3</div>
<div class="t" style="left:22px;top:856px;font-size:13px;font-family:'Liberation Serif','DejaVu Serif',serif;font-weight:bold;color:#fff">3</div>
<div class="a" style="left:52px;top:770px;width:120px;height:94.500px;background:#fcaf1b"></div>
<div class="pkf" style="left:57px;top:774px;width:12px;height:20px"></div>
<div class="a" style="left:60px;top:777px;width:6px;height:14px;border-radius:3px;background:#bb72a2"></div>
<div class="a" style="left:60px;top:777px;width:6px;height:6px;border-radius:3px;background:#c07ca9"></div>
<div class="t b" style="left:50px;width:120px;text-align:center;top:777px;font-size:13px;color:#1c1c1c;letter-spacing:-.1px">Seq 1</div>
<div class="a" style="left:148px;top:775px;width:18px;height:18px;background:#222;border:1px solid #171717;border-radius:4px"></div>
<svg style="left:151.8px;top:778.8px" width="10.400" height="10.400" viewBox="0 0 12 12"><g stroke="#dcdcdc" stroke-width="2.300" transform="rotate(22.500 6 6)"><path d="M6 .2v11.600M.2 6h11.600M1.900 1.900l8.200 8.200M10.100 1.900 1.900 10.100"/></g><circle cx="6" cy="6" r="4.200" fill="#dcdcdc"/><circle cx="6" cy="6" r="2.100" fill="#222"/></svg>
<div class="pkf" style="left:53px;top:839px;width:118px;height:24.500px"></div>
<div class="pki" style="left:56px;top:800px;width:112px;height:36px"></div>
<div class="pki" style="left:56px;top:842px;width:53px;height:18px"></div>
<div class="pki" style="left:115px;top:842px;width:53px;height:18px"></div>
<div class="t pt" style="left:52px;width:120px;text-align:center;top:804.500px;font-size:11px;letter-spacing:-.35px">00:00:02</div>
<div class="t pt" style="left:51px;width:120px;text-align:center;top:823px;font-size:11px;letter-spacing:0">Map 1</div>
<svg style="left:80px;top:846px" width="8" height="10" viewBox="0 0 8 10"><path d="M.5 .3v9.400L7 5Z" fill="#bd74a3"/></svg>
<svg style="left:135px;top:845px" width="12" height="12" viewBox="0 0 12 12" fill="none" stroke="#bd74a3" stroke-width="1.100"><path d="M1.500 5.500v-3h8.500M8 .5l2 2-2 2M10.500 6.500v3H2M4 7.500l-2 2 2 2"/></svg>
<div class="a" style="left:53px;top:865px;width:118.500px;height:15px;background:#555;color:#fff;font-size:11.500px;text-align:center;line-height:16px">1</div>
<div class="a" style="left:172px;top:770px;width:120px;height:94.500px;background:#1e1e1e"></div>
<div class="a" style="left:173px;top:770px;width:118.500px;height:28px;background:#3f3f3f"></div>
<div class="pkf" style="left:173px;top:797.500px;width:118.500px;height:66px"></div>
<div class="pkf" style="left:177px;top:774px;width:12px;height:20px"></div>
<div class="a" style="left:180px;top:777px;width:6px;height:14px;border-radius:3px;background:#bb72a2"></div>
<div class="a" style="left:180px;top:777px;width:6px;height:6px;border-radius:3px;background:#c07ca9"></div>
<div class="t b" style="left:170px;width:120px;text-align:center;top:777px;font-size:13px;color:#fff;letter-spacing:-.1px">Seq 2</div>
<div class="a" style="left:268px;top:775px;width:18px;height:18px;background:#222;border:1px solid #171717;border-radius:4px"></div>
<svg style="left:271.8px;top:778.8px" width="10.400" height="10.400" viewBox="0 0 12 12"><g stroke="#dcdcdc" stroke-width="2.300" transform="rotate(22.500 6 6)"><path d="M6 .2v11.600M.2 6h11.600M1.900 1.900l8.200 8.200M10.100 1.900 1.900 10.100"/></g><circle cx="6" cy="6" r="4.200" fill="#dcdcdc"/><circle cx="6" cy="6" r="2.100" fill="#222"/></svg>
<div class="pki" style="left:176px;top:800px;width:112px;height:36px"></div>
<div class="pki" style="left:176px;top:842px;width:53px;height:18px"></div>
<div class="pki" style="left:235px;top:842px;width:53px;height:18px"></div>
<div class="t pt" style="left:172px;width:120px;text-align:center;top:804.500px;font-size:11px;letter-spacing:-.35px">00:00:02</div>
<div class="t pt" style="left:171px;width:120px;text-align:center;top:823px;font-size:11px;letter-spacing:0">Map 1</div>
<svg style="left:255px;top:845px" width="12" height="12" viewBox="0 0 12 12" fill="none" stroke="#bd74a3" stroke-width="1.100"><path d="M1.500 5.500v-3h8.500M8 .5l2 2-2 2M10.500 6.500v3H2M4 7.500l-2 2 2 2"/></svg>
<div class="a" style="left:173px;top:865px;width:118.500px;height:15px;background:#555;color:#fff;font-size:11.500px;text-align:center;line-height:16px">2</div>
<div class="a" style="left:292px;top:770px;width:120px;height:94.500px;background:#1e1e1e"></div>
<div class="a" style="left:293px;top:770px;width:118.500px;height:28px;background:#3f3f3f"></div>
<div class="pkf" style="left:293px;top:797.500px;width:118.500px;height:66px"></div>
<div class="pkf" style="left:297px;top:774px;width:12px;height:20px"></div>
<div class="a" style="left:300px;top:777px;width:6px;height:14px;border-radius:3px;background:#bb72a2"></div>
<div class="a" style="left:300px;top:777px;width:6px;height:6px;border-radius:3px;background:#c07ca9"></div>
<div class="t b" style="left:290px;width:120px;text-align:center;top:777px;font-size:13px;color:#fff;letter-spacing:-.1px">Seq 3</div>
<div class="a" style="left:388px;top:775px;width:18px;height:18px;background:#222;border:1px solid #171717;border-radius:4px"></div>
<svg style="left:391.8px;top:778.8px" width="10.400" height="10.400" viewBox="0 0 12 12"><g stroke="#dcdcdc" stroke-width="2.300" transform="rotate(22.500 6 6)"><path d="M6 .2v11.600M.2 6h11.600M1.900 1.900l8.200 8.200M10.100 1.900 1.900 10.100"/></g><circle cx="6" cy="6" r="4.200" fill="#dcdcdc"/><circle cx="6" cy="6" r="2.100" fill="#222"/></svg>
<div class="pki" style="left:296px;top:800px;width:112px;height:36px"></div>
<div class="pki" style="left:296px;top:842px;width:53px;height:18px"></div>
<div class="pki" style="left:355px;top:842px;width:53px;height:18px"></div>
<div class="t pt" style="left:292px;width:120px;text-align:center;top:804.500px;font-size:11px;letter-spacing:-.35px">00:00:02</div>
<div class="t pt" style="left:291px;width:120px;text-align:center;top:823px;font-size:11px;letter-spacing:0">Map 1</div>
<svg style="left:320px;top:846px" width="8" height="10" viewBox="0 0 8 10"><path d="M.5 .3v9.400L7 5Z" fill="#bd74a3"/></svg>
<svg style="left:375px;top:845px" width="12" height="12" viewBox="0 0 12 12" fill="none" stroke="#bd74a3" stroke-width="1.100"><path d="M1.500 5.500v-3h8.500M8 .5l2 2-2 2M10.500 6.500v3H2M4 7.500l-2 2 2 2"/></svg>
<div class="a" style="left:293px;top:865px;width:118.500px;height:15px;background:#555;color:#fff;font-size:11.500px;text-align:center;line-height:16px">3</div>
<div class="a" style="left:412px;top:770px;width:120px;height:94.500px;background:#1e1e1e"></div>
<div class="a" style="left:413px;top:770px;width:118.500px;height:28px;background:#3f3f3f"></div>
<div class="pkf" style="left:413px;top:797.500px;width:118.500px;height:66px"></div>
<div class="pkf" style="left:417px;top:774px;width:12px;height:20px"></div>
<div class="a" style="left:420px;top:777px;width:6px;height:14px;border-radius:3px;background:#bb72a2"></div>
<div class="a" style="left:420px;top:777px;width:6px;height:6px;border-radius:3px;background:#c07ca9"></div>
<div class="t b" style="left:410px;width:120px;text-align:center;top:777px;font-size:13px;color:#fff;letter-spacing:-.1px">Seq 4</div>
<div class="a" style="left:508px;top:775px;width:18px;height:18px;background:#222;border:1px solid #171717;border-radius:4px"></div>
<svg style="left:511.8px;top:778.8px" width="10.400" height="10.400" viewBox="0 0 12 12"><g stroke="#dcdcdc" stroke-width="2.300" transform="rotate(22.500 6 6)"><path d="M6 .2v11.600M.2 6h11.600M1.900 1.900l8.200 8.200M10.100 1.900 1.900 10.100"/></g><circle cx="6" cy="6" r="4.200" fill="#dcdcdc"/><circle cx="6" cy="6" r="2.100" fill="#222"/></svg>
<div class="pki" style="left:416px;top:800px;width:112px;height:36px"></div>
<div class="pki" style="left:416px;top:842px;width:53px;height:18px"></div>
<div class="pki" style="left:475px;top:842px;width:53px;height:18px"></div>
<div class="t pt" style="left:412px;width:120px;text-align:center;top:804.500px;font-size:11px;letter-spacing:-.35px">00:00:02</div>
<div class="t pt" style="left:411px;width:120px;text-align:center;top:823px;font-size:11px;letter-spacing:0">Map 1</div>
<svg style="left:440px;top:846px" width="8" height="10" viewBox="0 0 8 10"><path d="M.5 .3v9.400L7 5Z" fill="#bd74a3"/></svg>
<svg style="left:495px;top:845px" width="12" height="12" viewBox="0 0 12 12" fill="none" stroke="#bd74a3" stroke-width="1.100"><path d="M1.500 5.500v-3h8.500M8 .5l2 2-2 2M10.500 6.500v3H2M4 7.500l-2 2 2 2"/></svg>
<div class="a" style="left:413px;top:865px;width:118.500px;height:15px;background:#555;color:#fff;font-size:11.500px;text-align:center;line-height:16px">4</div>
<div class="a" style="left:532px;top:770px;width:120px;height:94.500px;background:#1e1e1e"></div>
<div class="a" style="left:533px;top:770px;width:118.500px;height:28px;background:#3f3f3f"></div>
<div class="pkf" style="left:533px;top:797.500px;width:118.500px;height:66px"></div>
<div class="pkf" style="left:537px;top:774px;width:12px;height:20px"></div>
<div class="a" style="left:540px;top:777px;width:6px;height:14px;border-radius:3px;background:#bb72a2"></div>
<div class="a" style="left:540px;top:777px;width:6px;height:6px;border-radius:3px;background:#c07ca9"></div>
<div class="t b" style="left:530px;width:120px;text-align:center;top:777px;font-size:13px;color:#fff;letter-spacing:-.1px">Seq 5</div>
<div class="a" style="left:628px;top:775px;width:18px;height:18px;background:#222;border:1px solid #171717;border-radius:4px"></div>
<svg style="left:631.8px;top:778.8px" width="10.400" height="10.400" viewBox="0 0 12 12"><g stroke="#dcdcdc" stroke-width="2.300" transform="rotate(22.500 6 6)"><path d="M6 .2v11.600M.2 6h11.600M1.900 1.900l8.200 8.200M10.100 1.900 1.900 10.100"/></g><circle cx="6" cy="6" r="4.200" fill="#dcdcdc"/><circle cx="6" cy="6" r="2.100" fill="#222"/></svg>
<div class="pki" style="left:536px;top:800px;width:112px;height:36px"></div>
<div class="pki" style="left:536px;top:842px;width:53px;height:18px"></div>
<div class="pki" style="left:595px;top:842px;width:53px;height:18px"></div>
<div class="t pt" style="left:532px;width:120px;text-align:center;top:804.500px;font-size:11px;letter-spacing:-.35px">00:00:02</div>
<div class="t pt" style="left:531px;width:120px;text-align:center;top:823px;font-size:11px;letter-spacing:0">Map 1</div>
<svg style="left:560px;top:846px" width="8" height="10" viewBox="0 0 8 10"><path d="M.5 .3v9.400L7 5Z" fill="#bd74a3"/></svg>
<svg style="left:615px;top:845px" width="12" height="12" viewBox="0 0 12 12" fill="none" stroke="#bd74a3" stroke-width="1.100"><path d="M1.500 5.500v-3h8.500M8 .5l2 2-2 2M10.500 6.500v3H2M4 7.500l-2 2 2 2"/></svg>
<div class="a" style="left:533px;top:865px;width:118.500px;height:15px;background:#555;color:#fff;font-size:11.500px;text-align:center;line-height:16px">5</div>
<div class="a" style="left:653px;top:865px;width:118.500px;height:15px;background:#555;color:#fff;font-size:11.500px;text-align:center;line-height:16px">6</div>
<div class="t" style="left:107.500px;top:811.500px;font-size:13px;font-family:'Liberation Serif','DejaVu Serif',serif;font-weight:bold;color:#fff">1</div>
<div class="t" style="left:198px;top:844.500px;font-size:13px;font-family:'Liberation Serif','DejaVu Serif',serif;font-weight:bold;color:#fff">2</div>
<svg style="left:700px;top:808px" width="24" height="24" viewBox="0 0 24 24"><path d="M0 12h24M12 0v24" stroke="#fcaf1b" stroke-width="2.600"/></svg>
<!-- /SECTION:seq -->
<!-- ===== transport ===== -->
<!-- SECTION:transport -->
<div class="a" style="left:2px;top:893px;width:1222px;height:36px;background:#353535"></div>
<div class="a" style="left:0;top:927.500px;width:1482px;height:1.500px;background:#2b2b2b"></div><div class="a" style="left:0;top:927.500px;width:157px;height:1.500px;background:#4a4a4a"></div>
<div class="t b" style="left:11.500px;top:902px;font-size:15px;color:#fff;letter-spacing:.1px">00:00:00</div>
<div class="pk" style="left:83px;top:899px;width:22px;height:22px;border-width:3px"></div>
<svg style="left:83px;top:899px" width="22" height="22" viewBox="0 0 22 22"><path d="M7 6v10" stroke="#bb70a1" stroke-width="1.800"/><path d="M15.500 5.500v11L8 11Z" fill="#bb70a1"/></svg>
<div class="pkf" style="left:111px;top:899px;width:44px;height:22px"></div>
<div class="pki" style="left:114px;top:902px;width:17px;height:16px"></div>
<div class="a" style="left:136px;top:902px;width:16px;height:16px;background:#c95a8f"></div>
<div class="a" style="left:139px;top:905px;width:10px;height:10px;background:#cd8ab7"></div>
<svg style="left:111px;top:899px" width="44" height="22" viewBox="0 0 44 22"><path d="M9.500 5.500v11L17 11Z" fill="#bb70a1"/></svg>
<div class="pk" style="left:161px;top:899px;width:22px;height:22px;border-width:3px"></div>
<svg style="left:161px;top:899px" width="22" height="22" viewBox="0 0 22 22"><path d="M15 6v10" stroke="#bb70a1" stroke-width="1.800"/><path d="M6.500 5.500v11L14 11Z" fill="#bb70a1"/></svg>
<div class="pk" style="left:205px;top:899px;width:22px;height:22px;border-width:3px"></div>
<svg style="left:205px;top:899px" width="22" height="22" viewBox="0 0 22 22"><g fill="none" stroke="#bb70a1" stroke-width="1.200"><path d="M4 7.500h3.500l6 7.500H18M4 15h3.500l6-7.500H18M16 5.500l2 2-2 2M16 13l2 2-2 2"/></g></svg>
<div class="a" style="left:236px;top:900px;width:1px;height:19px;background:#4c4c4c"></div>
<div class="pk" style="left:245px;top:899px;width:22px;height:22px;border-width:3px"></div>
<svg style="left:245px;top:899px" width="22" height="22" viewBox="0 0 22 22"><path d="M6 7.500h10M9 6h4M7 9h8v8H7Z" fill="#a95a8b" stroke="#a95a8b" stroke-width="1"/></svg>
<div class="pk" style="left:273px;top:899px;width:22px;height:22px;border-width:3px"></div>
<svg style="left:273px;top:899px" width="22" height="22" viewBox="0 0 22 22"><path d="M4 11h14M11 4v14" stroke="#bb70a1" stroke-width="3.200"/></svg>
<div class="a" style="left:335px;top:899px;width:150px;height:22px;background:#2b2b2b;border:1px solid #191919;border-radius:4px"></div>
<svg style="left:335px;top:899px" width="150" height="22" viewBox="0 0 150 22"><path d="M5.500 8v6M10 4v14M14.200 7v8M18 7v8" stroke="#cfcfcf" stroke-width="1.400"/><path d="M131 11h14M138 4v14" stroke="#fcaf1b" stroke-width="3.400"/></svg>
<div class="t b" style="left:368px;top:903px;font-size:13px;color:#fff;letter-spacing:-.05px">Add audio file</div>
<div class="a" style="left:731px;top:893px;width:55px;height:13px;background:#222;border:1px solid #191919;border-top:0;border-radius:0 0 4px 4px"></div>
<svg style="left:753px;top:896px" width="10" height="6" viewBox="0 0 10 6"><path d="M.8 .5h8.400L5 5.500Z" fill="#fff"/></svg>
<div class="a" style="left:1042px;top:900px;width:39px;height:20px;background:#3a3a3a;border:1px solid #171717;border-radius:3.500px"></div>
<div class="a" style="left:1061.500px;top:901px;width:18.500px;height:18px;background:#fcaf1b;border-radius:0 2px 2px 0"></div>
<svg style="left:1042px;top:900px" width="39" height="20" viewBox="0 0 39 20" fill="none"><path d="M7.500 15.500 9.300 4.500h3l1.800 11Z" stroke="#7a7a7a" stroke-width="1.200"/><path d="M10 13 15.500 5" stroke="#7a7a7a" stroke-width="1.200"/><circle cx="28.800" cy="11" r="4.800" stroke="#222" stroke-width="1.300"/><path d="M28.800 8v3.200M27.300 4.500h3" stroke="#222" stroke-width="1.300"/></svg>
<div class="t" style="left:1090px;top:904px;font-size:12px;color:#e0e0e0;letter-spacing:-.1px">Default:</div>
<div class="a" style="left:1139px;top:900px;width:75px;height:20px;background:#252525;border:1px solid #161616;border-radius:3.500px"></div>
<div class="t" style="left:1152px;top:905px;font-size:11px;color:#f0f0f0;letter-spacing:-.3px">00:00:02</div>
<svg style="left:1204px;top:903px" width="6" height="14" viewBox="0 0 6 14"><path d="M.8 4.500 3 1.800 5.200 4.500ZM.8 9.500 3 12.200 5.200 9.500Z" fill="#fff"/></svg>
<!-- /SECTION:transport -->
<!-- ===== audio ===== -->
<!-- SECTION:audio -->
<div class="a" style="left:1223px;top:769px;width:259px;height:160px;background:#2b2b2b"></div>
<div class="a" style="left:1226px;top:799px;width:255px;height:128.500px;background:#353535"></div>
<div class="a" style="left:1266px;top:799px;width:2px;height:128px;background:#2b2b2b"></div>
<div class="a" style="left:1227px;top:770px;width:9px;height:28px;background:#303030"></div>
<div class="a" style="left:1236px;top:770px;width:30px;height:28px;background:#484848"></div>
<div class="a" style="left:1269px;top:770px;width:9px;height:28px;background:#303030"></div>
<div class="a" style="left:1277px;top:770px;width:204px;height:28px;background:#484848"></div>
<svg style="left:1226px;top:770px" width="52" height="28" viewBox="0 0 52 28"><path d="M7.200 10.500v7L2.800 14ZM44.800 10.500v7L49.300 14Z" fill="#fff"/><g fill="none" stroke="#fcaf1b" stroke-width="1.300" stroke-linejoin="round" stroke-linecap="round"><path d="M19 22 20.800 6.800h3L26 22Z"/><path d="M19.300 19.800h6.400"/><path d="M22.300 18.200 27 12.300"/><circle cx="27.700" cy="11.300" r="1.300"/></g></svg>
<div class="t b" style="left:1289px;top:778px;font-size:13.500px;color:#f4f4f4;letter-spacing:-.6px">Audio Analysis</div>
<div class="pk" style="left:1419px;top:773px;width:30px;height:22px;border-width:3px"></div>
<div class="a" style="left:1425px;top:780px;width:18px;height:8px;border-radius:4px;background:#ad5c8e"></div><div class="a" style="left:1425px;top:780px;width:8px;height:8px;border-radius:4px;background:#b3659a"></div>
<div class="a" style="left:1454px;top:774.500px;width:20px;height:19px;background:#222;border:1px solid #171717;border-radius:4px"></div>
<svg style="left:1458.700px;top:778.800px" width="10.600" height="10.600" viewBox="0 0 12 12"><g stroke="#dcdcdc" stroke-width="2.300" transform="rotate(22.500 6 6)"><path d="M6 .2v11.600M.2 6h11.600M1.900 1.900l8.200 8.200M10.100 1.900 1.900 10.100"/></g><circle cx="6" cy="6" r="4.200" fill="#dcdcdc"/><circle cx="6" cy="6" r="2.100" fill="#222"/></svg>
<div class="a" style="left:1280px;top:807px;width:36px;height:114px;background:#3f3f3f;border:1px solid #202020;border-radius:4px"></div>
<div class="a" style="left:1281px;top:808px;width:34px;height:26px;background:#353535;border-bottom:1px solid #222;border-radius:3px 3px 0 0"></div>
<div class="t" style="left:1280px;width:36px;text-align:center;top:815px;font-size:12px;color:#d0d0d0;letter-spacing:-.2px">Gain</div>
<div class="a" style="left:1339px;top:807px;width:36px;height:114px;background:#3f3f3f;border:1px solid #202020;border-radius:4px"></div>
<div class="a" style="left:1340px;top:808px;width:34px;height:26px;background:#353535;border-bottom:1px solid #222;border-radius:3px 3px 0 0"></div>
<div class="t" style="left:1339px;width:36px;text-align:center;top:815px;font-size:12px;color:#d0d0d0;letter-spacing:-.2px">Bass</div>
<div class="a" style="left:1349px;top:844px;width:16px;height:66px;background:#222;border:1px solid #2c2c2c;border-radius:2px"></div>
<div class="a" style="left:1386px;top:807px;width:36px;height:114px;background:#3f3f3f;border:1px solid #202020;border-radius:4px"></div>
<div class="a" style="left:1387px;top:808px;width:34px;height:26px;background:#353535;border-bottom:1px solid #222;border-radius:3px 3px 0 0"></div>
<div class="t" style="left:1386px;width:36px;text-align:center;top:815px;font-size:12px;color:#d0d0d0;letter-spacing:-.2px">Mid</div>
<div class="a" style="left:1396px;top:844px;width:16px;height:66px;background:#222;border:1px solid #2c2c2c;border-radius:2px"></div>
<div class="a" style="left:1433px;top:807px;width:36px;height:114px;background:#3f3f3f;border:1px solid #202020;border-radius:4px"></div>
<div class="a" style="left:1434px;top:808px;width:34px;height:26px;background:#353535;border-bottom:1px solid #222;border-radius:3px 3px 0 0"></div>
<div class="t" style="left:1433px;width:36px;text-align:center;top:815px;font-size:12px;color:#d0d0d0;letter-spacing:-.2px">High</div>
<div class="a" style="left:1443px;top:844px;width:16px;height:66px;background:#222;border:1px solid #2c2c2c;border-radius:2px"></div>
<div class="pkf" style="left:1293px;top:844px;width:10.500px;height:66px"></div>
<div class="a" style="left:1295.500px;top:847px;width:5.500px;height:36px;background:#d4477a"></div>
<div class="a" style="left:1295.500px;top:883px;width:5.500px;height:9px;background:#c2639c"></div>
<div class="a" style="left:1295.500px;top:892px;width:5.500px;height:14px;background:#d9728a"></div>
<div class="a" style="left:1327px;top:807px;width:1px;height:114px;background:#222"></div>
<!-- /SECTION:audio -->
</body>
</html>
